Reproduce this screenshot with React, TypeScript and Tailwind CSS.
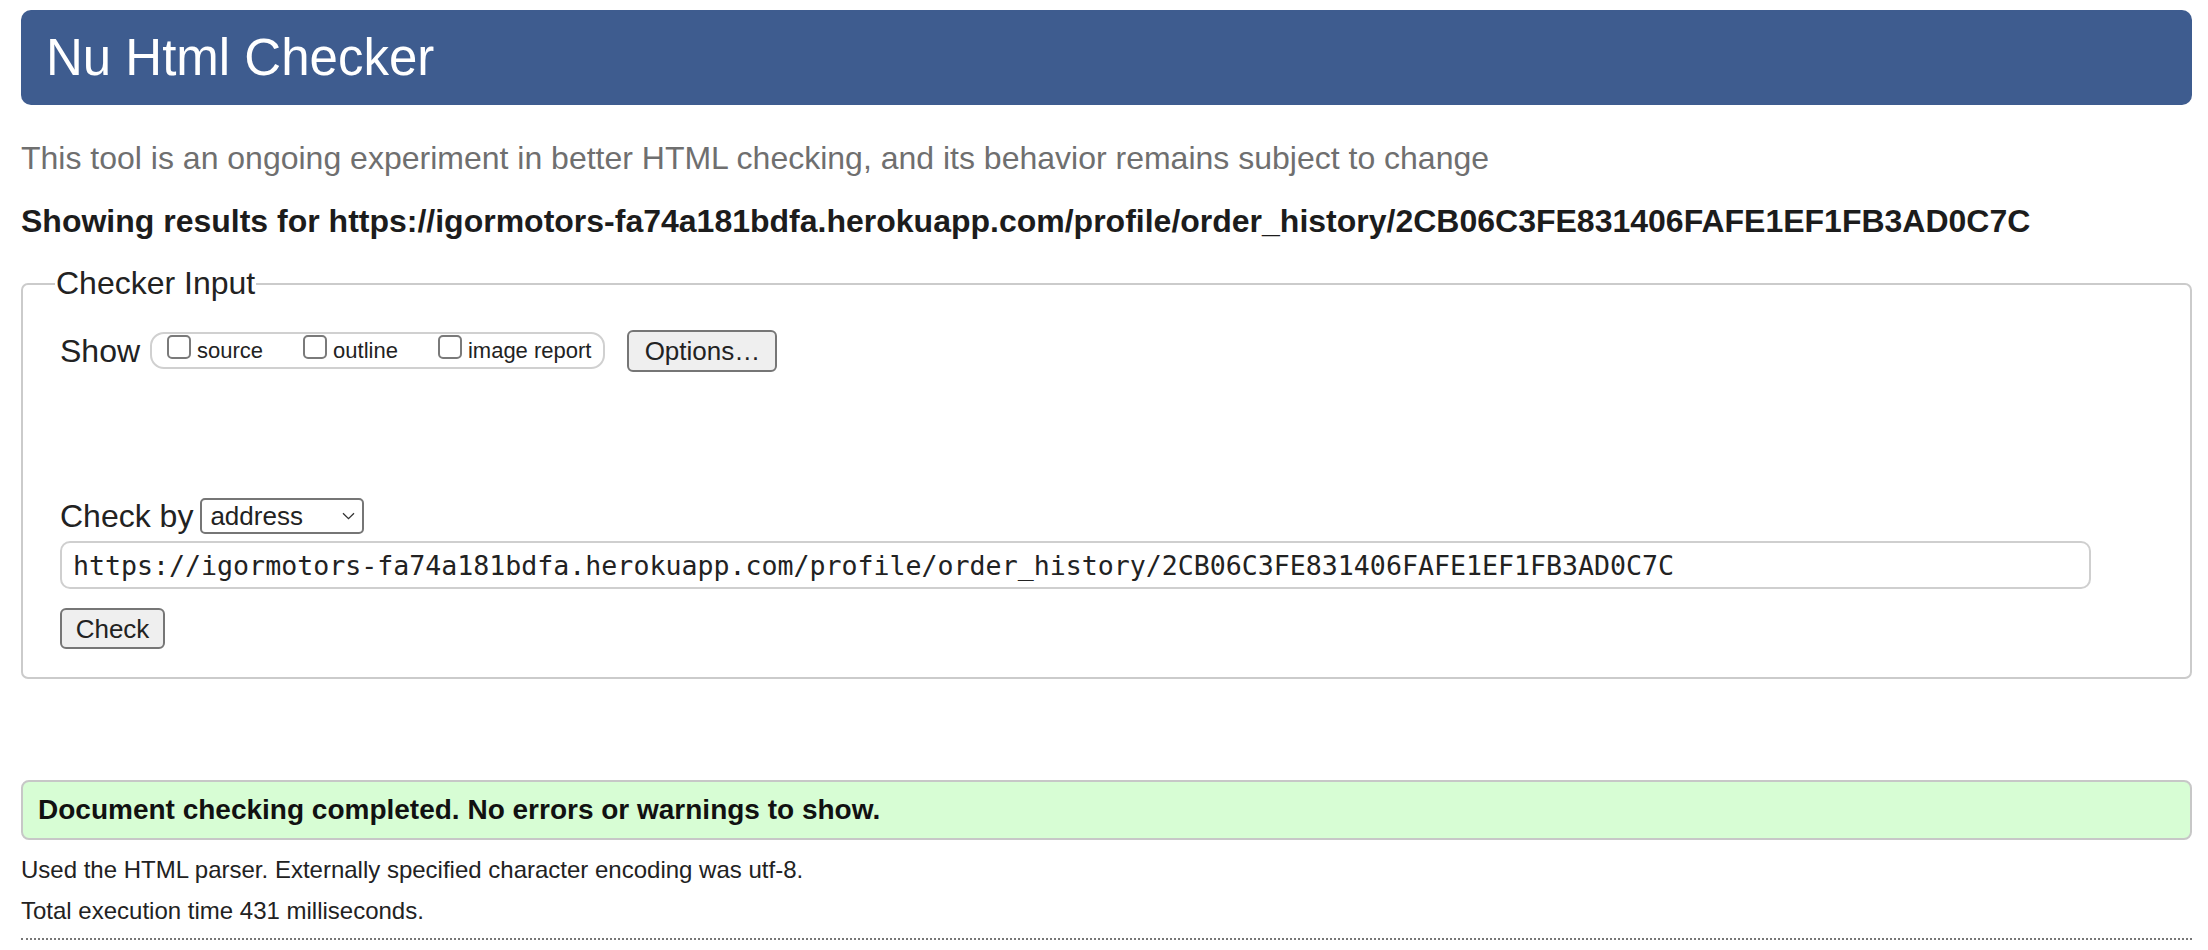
export default function App() {
  const url =
    "https://igormotors-fa74a181bdfa.herokuapp.com/profile/order_history/2CB06C3FE831406FAFE1EF1FB3AD0C7C";

  return (
    <div className="min-h-screen bg-white pl-[21px] pr-[16px] pt-[10px] pb-[12px] font-['Liberation_Sans',Arial,sans-serif] text-[#222]">
      <header className="flex h-[95px] items-center rounded-[10px] bg-[#3e5c8f] pl-[25px]">
        <h1 className="text-[51px] leading-none text-white">Nu Html Checker</h1>
      </header>

      <p className="mt-[35px] text-[32px] leading-[37px] text-[#6f6f6f]">
        This tool is an ongoing experiment in better HTML checking, and its behavior remains subject to change
      </p>
      <p className="mt-[26px] text-[32px] font-bold leading-[37px] text-[#1c1c1c]">
        Showing results for {url}
      </p>

      <fieldset className="mt-[25px] rounded-[7px] border-2 border-[#cbcbcb] pb-[28px] pl-[37px] pr-[99px]">
        <legend className="-ml-[5px] px-[1px] text-[32px] leading-[37px]">Checker Input</legend>

        <div className="mt-[27px] flex h-[43px] items-center">
          <span className="text-[32px] leading-none">Show</span>
          <div className="ml-[10px] flex h-[37px] items-center rounded-[14px] border-2 border-[#d0d0d0] pl-[15px] pr-[12px] text-[22px]">
            <span className="mb-[8px] h-[24px] w-[24px] rounded-[5px] border-2 border-[#7a7a7a] bg-white" />
            <span className="ml-[6px]">source</span>
            <span className="mb-[8px] ml-[40px] h-[24px] w-[24px] rounded-[5px] border-2 border-[#7a7a7a] bg-white" />
            <span className="ml-[6px]">outline</span>
            <span className="mb-[8px] ml-[40px] h-[24px] w-[24px] rounded-[5px] border-2 border-[#7a7a7a] bg-white" />
            <span className="ml-[6px]">image report</span>
          </div>
          <button className="ml-[22px] h-[42px] w-[150px] rounded-[6px] border-2 border-[#767676] bg-[#efefef] text-[26px]">
            Options…
          </button>
        </div>

        <div className="mt-[126px] flex h-[36px] items-center">
          <span className="text-[32px] leading-none">Check by</span>
          <div className="ml-[7px] flex h-[36px] w-[164px] items-center justify-between rounded-[5px] border-2 border-[#767676] pl-[8px] pr-[7px] text-[26px]">
            <span>address</span>
            <svg width="13" height="8" viewBox="0 0 13 8" fill="none">
              <path d="M1 1.2l5.5 5.5L12 1.2" stroke="#333" strokeWidth="1.3" />
            </svg>
          </div>
        </div>

        <input
          readOnly
          value={url}
          className="mt-[7px] block h-[48px] w-full rounded-[10px] border-2 border-[#cfcfcf] pl-[11px] font-['DejaVu_Sans_Mono',monospace] text-[26.6px] text-[#222] outline-none"
        />

        <button className="mt-[19px] block h-[41px] w-[105px] rounded-[6px] border-2 border-[#767676] bg-[#efefef] text-[26px]">
          Check
        </button>
      </fieldset>

      <div className="mt-[101px] flex h-[60px] items-center rounded-[8px] border-2 border-[#c7c7c7] bg-[#d7fdd4] pl-[15px]">
        <p className="text-[28px] font-bold text-[#111]">
          Document checking completed. No errors or warnings to show.
        </p>
      </div>

      <p className="mt-[15px] text-[24px] leading-[30px]">
        Used the HTML parser. Externally specified character encoding was utf-8.
      </p>
      <p className="mt-[11px] text-[24px] leading-[30px]">Total execution time 431 milliseconds.</p>

      <div className="mt-[12px] border-t-2 border-dotted border-[#777]" />
    </div>
  );
}
